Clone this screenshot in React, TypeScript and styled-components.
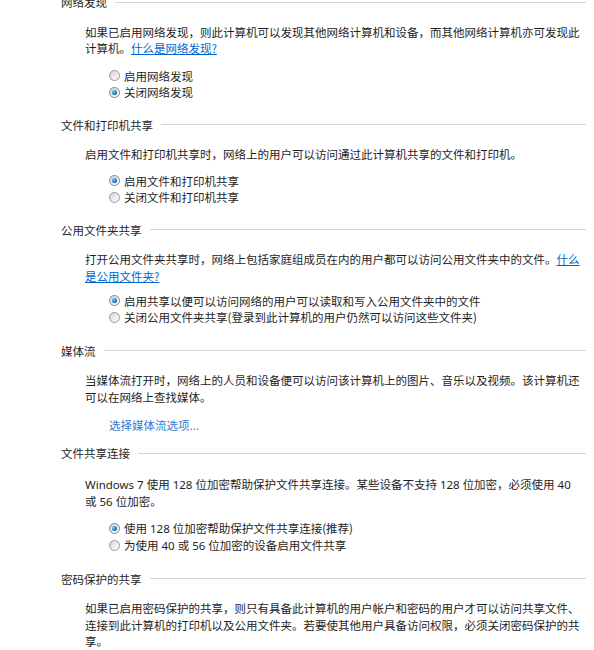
import React from "react";
import styled, { createGlobalStyle } from "styled-components";

const Global = createGlobalStyle`
  html, body { margin: 0; padding: 0; background: #ffffff; }
  body {
    font-family: "Noto Sans CJK SC", "Noto Sans", sans-serif;
    font-size: 11.5px;
    color: #1e1e1e;
  }
`;

const Page = styled.div`
  padding: 0 8px 0 61px;
  margin-top: -6px;
  line-height: 16.5px;
  overflow: hidden;
  height: 656px;
`;

const Section = styled.section<{ $after?: number }>`
  display: flex;
  flex-direction: column;
  margin-bottom: ${(p) => p.$after ?? 16}px;
`;

const Header = styled.div`
  display: flex;
  align-items: center;
  gap: 8px;
  color: #262626;
  white-space: nowrap;
  &::after {
    content: "";
    flex: 1;
    height: 1px;
    background: #d6d6d6;
  }
`;

const Body = styled.p<{ $top?: number }>`
  margin: ${(p) => p.$top ?? 13}px 0 0 24px;
  white-space: nowrap;
`;

const Latin = styled.span`
  font-family: "Noto Sans", "Noto Sans CJK SC", sans-serif;
  font-size: 11.5px;
`;

const Link = styled.a<{ $plain?: boolean }>`
  color: ${(p) => (p.$plain ? "#2f7bd0" : "#0066cc")};
  text-decoration: ${(p) => (p.$plain ? "none" : "underline")};
  cursor: pointer;
`;

const Options = styled.div<{ $gap?: number }>`
  display: flex;
  flex-direction: column;
  margin: ${(p) => p.$gap ?? 10}px 0 0 48px;
`;

const OptionRow = styled.label`
  display: flex;
  align-items: center;
  height: 16.5px;
  white-space: nowrap;
`;

const RadioDot = styled.span<{ $checked?: boolean }>`
  width: 9px;
  height: 9px;
  border-radius: 50%;
  border: 1px solid ${(p) => (p.$checked ? "#6c8aa6" : "#9a9a9a")};
  background: linear-gradient(135deg, #d2d2d2 0%, #eeeeee 60%, #ffffff 100%);
  margin-right: 4px;
  flex: none;
  display: flex;
  align-items: center;
  justify-content: center;
  &::after {
    content: "";
    display: ${(p) => (p.$checked ? "block" : "none")};
    width: 5px;
    height: 5px;
    border-radius: 50%;
    background: radial-gradient(circle at 35% 35%, #7fd0ff 0%, #1a78c2 55%, #0b3f78 100%);
  }
`;

const LinkLine = styled.div`
  margin: 11.5px 0 0 48px;
`;

const Option = ({ checked, children }: { checked?: boolean; children: React.ReactNode }) => (
  <OptionRow>
    <RadioDot $checked={checked} />
    <span>{children}</span>
  </OptionRow>
);

export default function App() {
  return (
    <>
      <Global />
      <Page>
        <Section $after={16}>
          <Header>网络发现</Header>
          <Body>
            如果已启用网络发现，则此计算机可以发现其他网络计算机和设备，而其他网络计算机亦可发现此
            <br />
            计算机。<Link>什么是网络发现?</Link>
          </Body>
          <Options $gap={11}>
            <Option>启用网络发现</Option>
            <Option checked>关闭网络发现</Option>
          </Options>
        </Section>

        <Section>
          <Header>文件和打印机共享</Header>
          <Body>启用文件和打印机共享时，网络上的用户可以访问通过此计算机共享的文件和打印机。</Body>
          <Options $gap={10}>
            <Option checked>启用文件和打印机共享</Option>
            <Option>关闭文件和打印机共享</Option>
          </Options>
        </Section>

        <Section $after={17}>
          <Header>公用文件夹共享</Header>
          <Body>
            打开公用文件夹共享时，网络上包括家庭组成员在内的用户都可以访问公用文件夹中的文件。<Link>什么</Link>
            <br />
            <Link>是公用文件夹?</Link>
          </Body>
          <Options $gap={8.5}>
            <Option checked>启用共享以便可以访问网络的用户可以读取和写入公用文件夹中的文件</Option>
            <Option>关闭公用文件夹共享(登录到此计算机的用户仍然可以访问这些文件夹)</Option>
          </Options>
        </Section>

        <Section $after={12}>
          <Header>媒体流</Header>
          <Body>
            当媒体流打开时，网络上的人员和设备便可以访问该计算机上的图片、音乐以及视频。该计算机还
            <br />
            可以在网络上查找媒体。
          </Body>
          <LinkLine>
            <Link $plain>选择媒体流选项...</Link>
          </LinkLine>
        </Section>

        <Section $after={17}>
          <Header>文件共享连接</Header>
          <Body $top={14}>
            <Latin>Windows 7 </Latin>使用<Latin> 128 </Latin>位加密帮助保护文件共享连接。某些设备不支持<Latin> 128 </Latin>位加密，必须使用<Latin> 40</Latin>
            <br />
            或<Latin> 56 </Latin>位加密。
          </Body>
          <Options $gap={10}>
            <Option checked>
              使用<Latin> 128 </Latin>位加密帮助保护文件共享连接(推荐)
            </Option>
            <Option>
              为使用<Latin> 40 </Latin>或<Latin> 56 </Latin>位加密的设备启用文件共享
            </Option>
          </Options>
        </Section>

        <Section>
          <Header>密码保护的共享</Header>
          <Body>
            如果已启用密码保护的共享，则只有具备此计算机的用户帐户和密码的用户才可以访问共享文件、
            <br />
            连接到此计算机的打印机以及公用文件夹。若要使其他用户具备访问权限，必须关闭密码保护的共
            <br />
            享。
          </Body>
        </Section>
      </Page>
    </>
  );
}
